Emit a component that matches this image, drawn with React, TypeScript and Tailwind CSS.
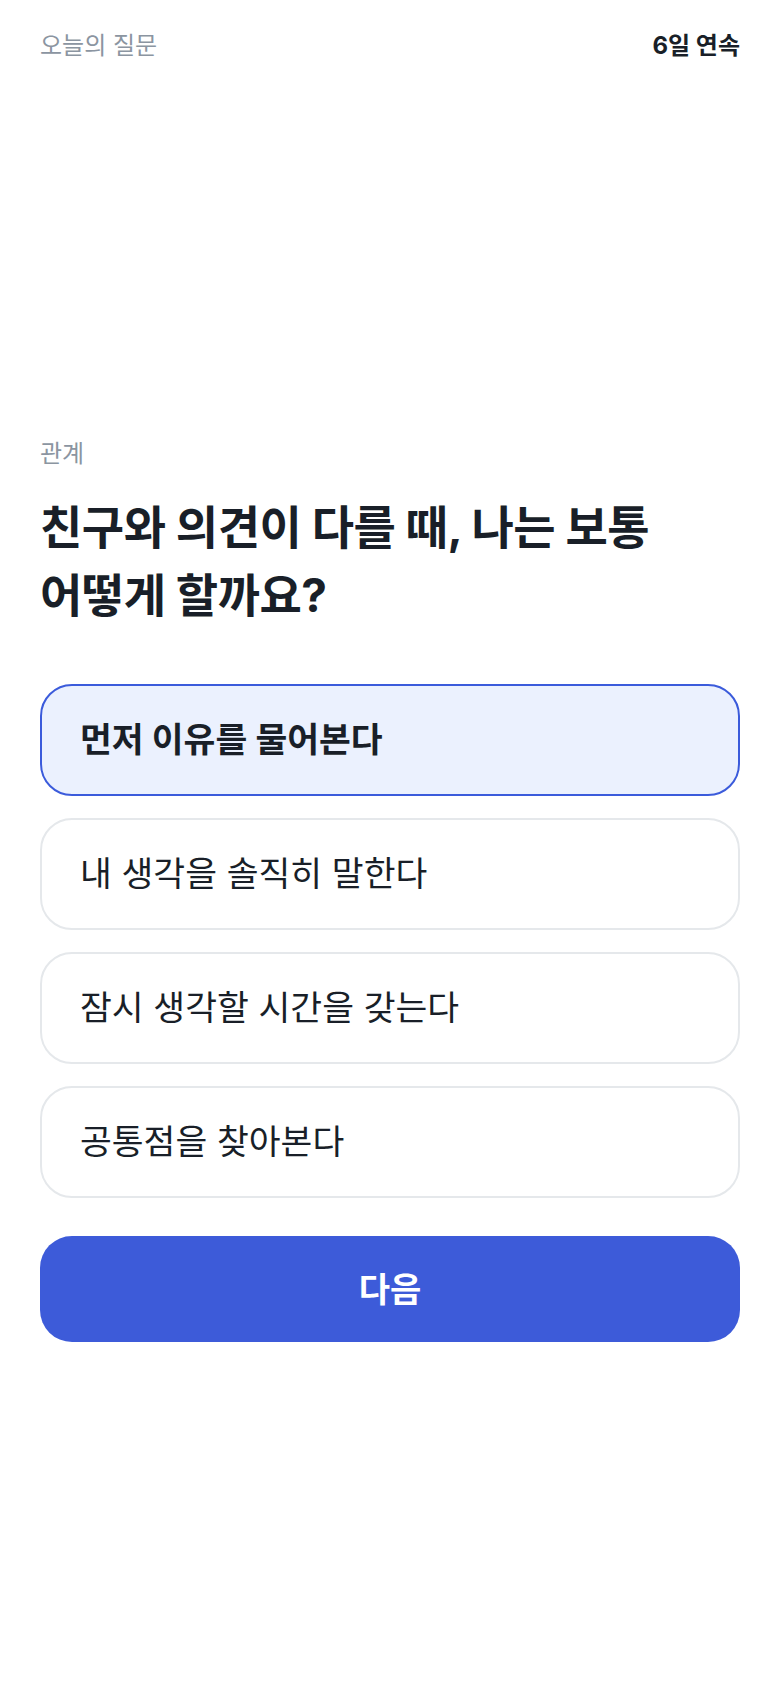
import React from "react";

const font = {
  fontFamily: 'Inter, "Noto Sans CJK KR", "Noto Sans", sans-serif',
};

const options = [
  "먼저 이유를 물어본다",
  "내 생각을 솔직히 말한다",
  "잠시 생각할 시간을 갖는다",
  "공통점을 찾아본다",
];

export default function App() {
  const selected = 0;
  return (
    <div className="min-h-[1688px] bg-white px-10" style={font}>
      <div className="flex items-center justify-between pt-[32px]">
        <span className="text-[24px] leading-[28px] text-[#8b95a1]">오늘의 질문</span>
        <span className="text-[24px] leading-[28px] font-bold text-[#191f28]">6일 연속</span>
      </div>

      <div className="mt-[380px] text-[24px] leading-[28px] text-[#8b95a1]">관계</div>

      <h1 className="mt-[25px] text-[46px] leading-[68px] font-bold tracking-[-0.5px] text-[#191f28]">
        친구와 의견이 다를 때, 나는 보통
        <br />
        어떻게 할까요?
      </h1>

      <div className="mt-[55px] flex flex-col gap-[22px]">
        {options.map((o, i) => (
          <div
            key={o}
            className={
              i === selected
                ? "flex h-[112px] items-center rounded-[32px] border-2 border-[#3b5bdb] bg-[#ebf1fe] px-[38px] text-[34.6px] font-bold text-[#191f28]"
                : "flex h-[112px] items-center rounded-[32px] border-2 border-[#e5e8eb] bg-white px-[38px] text-[34.6px] text-[#191f28]"
            }
          >
            {o}
          </div>
        ))}
      </div>

      <button className="mt-[38px] flex h-[106px] w-full items-center justify-center rounded-[32px] bg-[#3d5bd9] text-[34px] font-bold text-white">
        다음
      </button>
    </div>
  );
}
